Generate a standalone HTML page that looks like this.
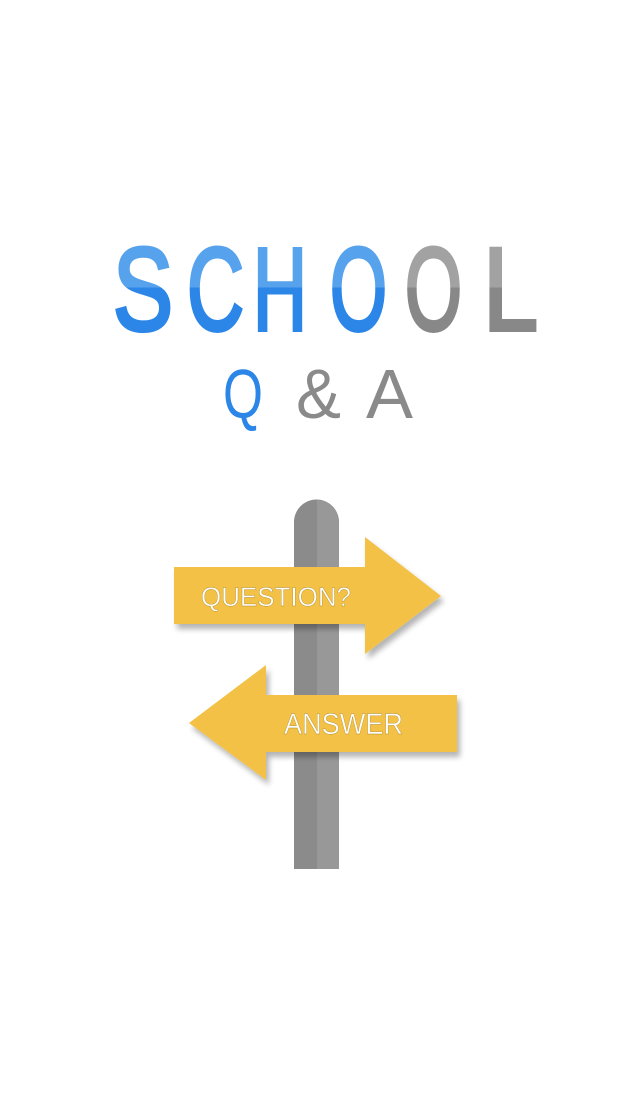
<!DOCTYPE html>
<html><head><meta charset="utf-8"><style>
html,body{margin:0;padding:0;background:#fff;width:621px;height:1104px;overflow:hidden}
svg{display:block}
</style></head><body>
<svg width="621" height="1104" viewBox="0 0 621 1104" xmlns="http://www.w3.org/2000/svg">
<defs>
<linearGradient id="bl" x1="0" y1="245" x2="0" y2="330" gradientUnits="userSpaceOnUse">
<stop offset="0" stop-color="#57a2ec"/><stop offset="0.5" stop-color="#57a2ec"/><stop offset="0.5" stop-color="#2b86e8"/><stop offset="1" stop-color="#2b86e8"/></linearGradient>
<linearGradient id="gr" x1="0" y1="245" x2="0" y2="330" gradientUnits="userSpaceOnUse">
<stop offset="0" stop-color="#a2a2a2"/><stop offset="0.5" stop-color="#a2a2a2"/><stop offset="0.5" stop-color="#888"/><stop offset="1" stop-color="#888"/></linearGradient>
<filter id="sh" x="-10%" y="-10%" width="130%" height="140%"><feGaussianBlur in="SourceAlpha" stdDeviation="3"/><feOffset dx="3" dy="5"/><feComponentTransfer><feFuncA type="linear" slope="0.3"/></feComponentTransfer><feMerge><feMergeNode/><feMergeNode in="SourceGraphic"/></feMerge></filter>
</defs>
<g font-family="Liberation Sans, sans-serif" font-size="118" stroke-width="4" lengthAdjust="spacingAndGlyphs">
<text x="113" y="330" fill="url(#bl)" stroke="url(#bl)" textLength="60" lengthAdjust="spacingAndGlyphs">S</text>
<text x="187" y="330" fill="url(#bl)" stroke="url(#bl)" textLength="57" lengthAdjust="spacingAndGlyphs">C</text>
<text x="253" y="330" fill="url(#bl)" stroke="url(#bl)" textLength="54" lengthAdjust="spacingAndGlyphs">H</text>
<text x="330" y="330" fill="url(#bl)" stroke="url(#bl)" textLength="57" lengthAdjust="spacingAndGlyphs">O</text>
<text x="405" y="330" fill="url(#gr)" stroke="url(#gr)" textLength="57" lengthAdjust="spacingAndGlyphs">O</text>
<text x="483" y="330" fill="url(#gr)" stroke="url(#gr)" textLength="55" lengthAdjust="spacingAndGlyphs">L</text>
</g>
<g font-family="Liberation Sans, sans-serif" font-size="70">
<text x="223" y="418" fill="#2b86e8" textLength="40" lengthAdjust="spacingAndGlyphs">Q</text>
<text x="296" y="418" fill="#8a8a8a" textLength="45" lengthAdjust="spacingAndGlyphs">&amp;</text>
<text x="366" y="418" fill="#8a8a8a" textLength="47" lengthAdjust="spacingAndGlyphs">A</text>
</g>
<path d="M294 869 V522 A22.5 22.5 0 0 1 339 522 V869 Z" fill="#8b8b8b"/>
<path d="M317 869 V500 A22.5 22.5 0 0 1 339 522 V869 Z" fill="#989898"/>
<path d="M174 567 H365 V537 L441 596 L365 654 V624 H174 Z" fill="#f2c145" filter="url(#sh)"/>
<path d="M457 695 H266 V665 L189 723 L266 780 V752 H457 Z" fill="#f2c145" filter="url(#sh)"/>
<g font-family="Liberation Sans, sans-serif" fill="#fff" stroke="#b08a2a" stroke-width="0.4">
<text x="201" y="606" font-size="27" textLength="150" lengthAdjust="spacingAndGlyphs">QUESTION?</text>
<text x="284" y="734" font-size="30" textLength="119" lengthAdjust="spacingAndGlyphs">ANSWER</text>
</g>
</svg>
</body></html>
